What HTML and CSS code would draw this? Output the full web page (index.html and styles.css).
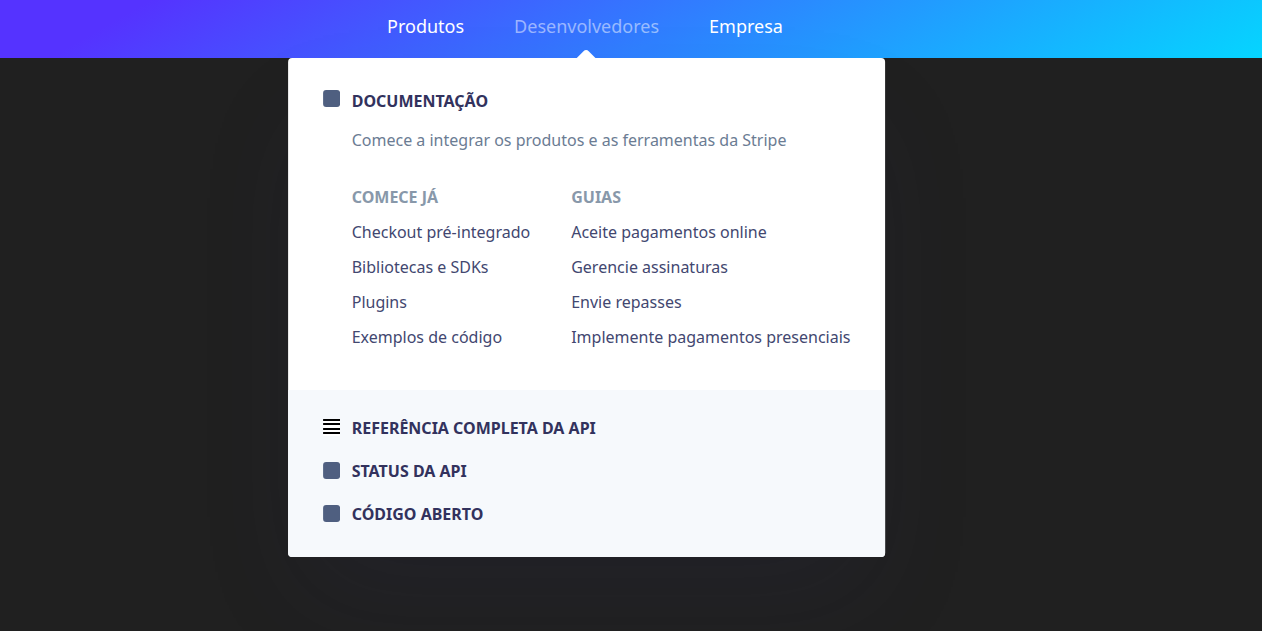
FILE: index.html
```html
<!DOCTYPE html>
<html lang="pt-BR">
<head>
<meta charset="utf-8">
<meta name="viewport" content="width=device-width, initial-scale=1">
<title>Desenvolvedores</title>
<link rel="stylesheet" href="styles.css">
</head>
<body>
<header class="header">
  <nav class="nav" aria-label="Principal">
    <ul class="menu">
      <li class="menu-item"><a class="menu-link" href="#produtos">Produtos</a></li>
      <li class="menu-item">
        <a class="menu-link active" href="#desenvolvedores">Desenvolvedores</a>
        <div class="dropdown">
          <section class="docs">
            <a class="entry" href="#documentacao">
              <svg class="icon" viewBox="0 0 17 17" aria-hidden="true"><rect width="17" height="17" rx="3" fill="#4f5f80"/></svg>
              <span class="entry-title">Documentação</span>
            </a>
            <p class="intro">Comece a integrar os produtos e as ferramentas da Stripe</p>
            <div class="columns">
              <div>
                <h2 class="heading">Comece já</h2>
                <ul class="links">
                  <li><a class="link" href="#checkout">Checkout pré-integrado</a></li>
                  <li><a class="link" href="#bibliotecas">Bibliotecas e SDKs</a></li>
                  <li><a class="link" href="#plugins">Plugins</a></li>
                  <li><a class="link" href="#exemplos">Exemplos de código</a></li>
                </ul>
              </div>
              <div>
                <h2 class="heading">Guias</h2>
                <ul class="links">
                  <li><a class="link" href="#pagamentos">Aceite pagamentos online</a></li>
                  <li><a class="link" href="#assinaturas">Gerencie assinaturas</a></li>
                  <li><a class="link" href="#repasses">Envie repasses</a></li>
                  <li><a class="link" href="#presenciais">Implemente pagamentos presenciais</a></li>
                </ul>
              </div>
            </div>
          </section>
          <section class="extras">
            <a class="entry" href="#api">
              <svg class="icon" viewBox="0 0 17 17" aria-hidden="true"><path fill="#fff" d="M0 0h17v17H0z"/><path fill="#000" d="M0 0h17v2H0zM0 4h17v2H0zM0 9h17v2H0zM0 13h17v2H0z"/></svg>
              <span class="entry-title">Referência completa da API</span>
            </a>
            <a class="entry" href="#status">
              <svg class="icon" viewBox="0 0 17 17" aria-hidden="true"><rect width="17" height="17" rx="3" fill="#4f5f80"/></svg>
              <span class="entry-title">Status da API</span>
            </a>
            <a class="entry" href="#codigo">
              <svg class="icon" viewBox="0 0 17 17" aria-hidden="true"><rect width="17" height="17" rx="3" fill="#4f5f80"/></svg>
              <span class="entry-title">Código aberto</span>
            </a>
          </section>
        </div>
      </li>
      <li class="menu-item"><a class="menu-link" href="#empresa">Empresa</a></li>
    </ul>
  </nav>
</header>
</body>
</html>
```
FILE: styles.css
```css
* { box-sizing: border-box; }
body {
  margin: 0;
  min-height: 100vh;
  background: #202020;
  font-family: "Noto Sans", sans-serif;
  font-size: 16px;
  line-height: 25px;
}
ul, p, h2 { margin: 0; padding: 0; }
ul { list-style: none; }
a { text-decoration: none; }
.header { background: linear-gradient(150deg, #5533ff 11%, #05d5ff); }
.nav { max-width: 1170px; }
.menu { display: flex; justify-content: center; }
.menu-item { position: relative; }
.menu-link {
  display: block;
  padding: 11px 25px 17px;
  color: #fff;
  font-size: 18px;
  line-height: 30px;
}
.menu-link.active { color: rgba(255, 255, 255, 0.5); }
.dropdown {
  position: absolute;
  top: 100%;
  left: 50%;
  transform: translateX(-50%);
  width: max-content;
  border-radius: 4px;
  background: #fff;
  box-shadow: 0 50px 100px -20px rgba(50, 50, 93, 0.15);
}
/* Arrow pointing at the open menu item */
.dropdown::before {
  content: "";
  position: absolute;
  top: -6px;
  left: calc(50% - 8px);
  width: 16px;
  height: 16px;
  border-radius: 4px 0 0;
  background: #fff;
  transform: rotate(45deg);
}
.docs { position: relative; padding: 31px 35px 40px; }
.entry { display: flex; align-items: flex-start; gap: 12px; }
.icon { width: 17px; height: 17px; margin-top: 1px; }
.extras .icon { margin-top: 3px; }
.entry-title {
  color: #32325d;
  font-weight: 700;
  text-transform: uppercase;
}
.intro { margin: 14px 0 32px 29px; color: #6b7c93; }
.columns { display: flex; gap: 41px; margin-left: 29px; }
.heading {
  margin-bottom: 10px;
  color: #8898aa;
  font-size: 16px;
  font-weight: 700;
  text-transform: uppercase;
}
.links { display: grid; gap: 10px; }
.link { display: block; color: #424770; }
.extras {
  display: grid;
  gap: 18px;
  padding: 26px 35px 30px;
  border-radius: 0 0 4px 4px;
  background: #f6f9fc;
}
```
